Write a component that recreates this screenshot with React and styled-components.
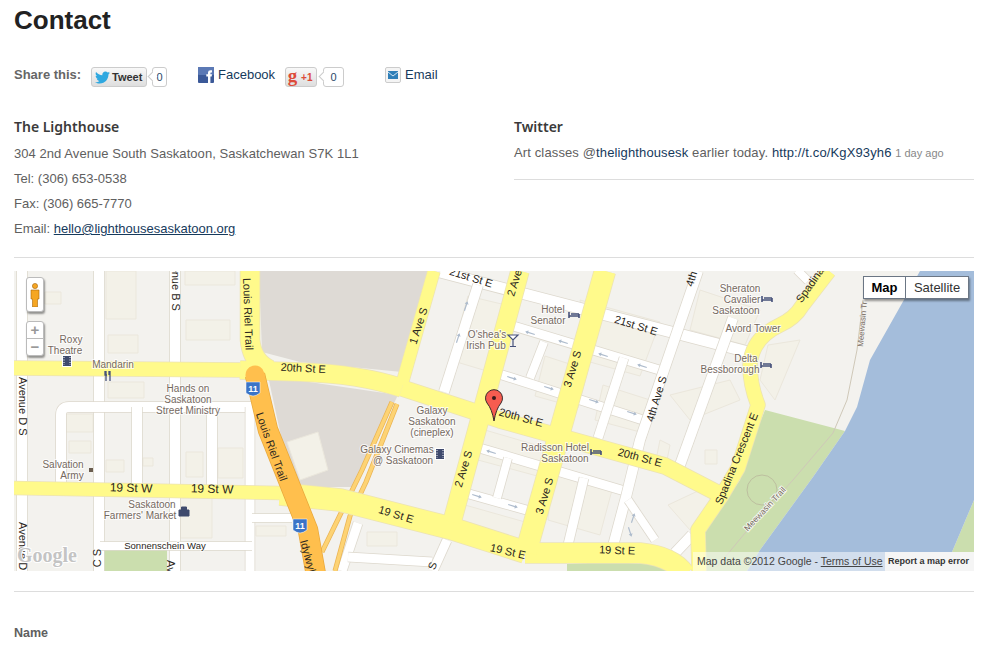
import React from "react";
import styled, { createGlobalStyle } from "styled-components";
import { FaTwitter } from "react-icons/fa";

const GlobalStyle = createGlobalStyle`
  html, body {
    margin: 0;
    padding: 0;
    background: #fff;
    overflow: hidden;
  }
  body {
    font-family: "Liberation Sans", Arial, sans-serif;
    font-size: 13px;
    color: #606060;
  }
`;

const Page = styled.div`
  width: 960px;
  height: 651px;
  padding: 0 23px 0 14px;
  overflow: hidden;
`;

const Title = styled.h1`
  margin: 0;
  padding-top: 5px;
  font-size: 26px;
  line-height: 30px;
  font-weight: 700;
  color: #222;
`;

const ShareRow = styled.div`
  display: flex;
  align-items: flex-start;
  margin-top: 32px;
  height: 20px;
`;

const ShareLabel = styled.strong`
  width: 77px;
  font-size: 13px;
  line-height: 16px;
  color: #666;
`;

const WidgetButton = styled.span`
  box-sizing: border-box;
  display: flex;
  align-items: center;
  width: ${(p) => p.$width}px;
  height: 20px;
  border: 1px solid #ccc;
  border-radius: 3px;
  background: linear-gradient(#f8f8f8, #dedede);
  font-size: 11px;
  font-weight: 700;
  color: ${(p) => p.$color};
`;

const Bubble = styled.span`
  position: relative;
  box-sizing: border-box;
  width: ${(p) => p.$width}px;
  height: 20px;
  margin-left: ${(p) => p.$gap}px;
  margin-right: ${(p) => p.$after}px;
  border: 1px solid #ccc;
  border-radius: 3px;
  font-size: 11px;
  line-height: 18px;
  text-align: center;
  color: #2b4a6b;

  &::before {
    content: "";
    position: absolute;
    left: -4px;
    top: 5px;
    width: 6px;
    height: 6px;
    background: #fff;
    border-left: 1px solid #ccc;
    border-bottom: 1px solid #ccc;
    transform: rotate(45deg);
  }
`;

const ShareLink = styled.a`
  display: flex;
  align-items: flex-start;
  gap: 4px;
  margin-right: ${(p) => p.$after}px;
  line-height: 16px;
  color: #163a5c;
`;

const GoogleG = styled.span`
  width: 13px;
  height: 18px;
  font-family: "Liberation Serif", serif;
  font-size: 19px;
  line-height: 15px;
  font-weight: 700;
  text-align: center;
  color: #dd4b39;
`;

const PlusOne = styled.span`
  margin-left: 2px;
  color: #dd4b39;
  font-size: 10px;
`;

const Columns = styled.div`
  display: grid;
  grid-template-columns: 460px 460px;
  column-gap: 40px;
  margin-top: 30px;
`;

const Heading = styled.h3`
  margin: 0 0 ${(p) => p.$below}px;
  font-family: "Noto Sans", sans-serif;
  font-size: 14px;
  line-height: 20px;
  font-weight: 600;
  color: #3a3a3a;
`;

const InfoLine = styled.p`
  margin: 0;
  line-height: 25px;
  letter-spacing: ${(p) => p.$spread || 0}px;
`;

const TweetLine = styled.p`
  margin: 0;
  padding: 3px 0 18px;
  border-bottom: 1px solid #ddd;
  line-height: 15px;
  letter-spacing: 0.13px;
`;

const BlueLink = styled.a`
  color: #163a5c;
`;

const MailLink = styled.a`
  color: #163a5c;
  text-decoration: underline;
`;

const TimeAgo = styled.small`
  font-size: 11px;
  letter-spacing: 0;
  color: #888;
`;

const Rule = styled.hr`
  margin: ${(p) => p.$top}px 0 ${(p) => p.$bottom}px;
  border: 0;
  border-top: 1px solid #ddd;
`;

const MapFrame = styled.div`
  position: relative;
  width: 960px;
  height: 300px;
  overflow: hidden;
  background: #f3f2ee;
`;

const MapCanvas = styled.svg`
  display: block;
  width: 960px;
  height: 300px;
`;

const MapLabel = styled.text`
  font-family: "Liberation Sans", Arial, sans-serif;
  font-size: ${(p) => p.$size || 11}px;
  fill: ${(p) => (p.$poi ? "#75695f" : "#2a2620")};
  stroke: ${(p) => (p.$halo ? "#fff" : "none")};
  stroke-width: 2px;
  stroke-opacity: 0.75;
  paint-order: stroke;
  text-anchor: ${(p) => p.$anchor || "middle"};
`;

const GoogleMark = styled.text`
  font-family: "Liberation Serif", serif;
  font-size: 20px;
  font-weight: 700;
  fill: #c4c4c4;
  stroke: #fff;
  stroke-width: 2px;
  paint-order: stroke;
`;

const ShieldNumber = styled.text`
  font-family: "Liberation Sans", Arial, sans-serif;
  font-size: 9px;
  font-weight: 700;
  fill: #fff;
  text-anchor: middle;
`;

const ControlCard = styled.div`
  position: absolute;
  left: 12px;
  top: ${(p) => p.$top}px;
  box-sizing: border-box;
  width: 18px;
  height: ${(p) => p.$height}px;
  background: #fff;
  border: 1px solid #bbb;
  border-radius: 3px;
  box-shadow: 1px 2px 2px rgba(0, 0, 0, 0.4);
  display: flex;
  flex-direction: column;
  align-items: center;
  justify-content: center;
`;

const ZoomKey = styled.span`
  flex: 1;
  width: 100%;
  text-align: center;
  font-size: 15px;
  line-height: 16px;
  font-weight: 700;
  color: #999;
  & + & {
    border-top: 1px solid #bbb;
  }
`;

const MapTypes = styled.div`
  position: absolute;
  right: 5px;
  top: 5px;
  display: flex;
  width: 106px;
  height: 23px;
  box-sizing: border-box;
  background: #fff;
  border: 1px solid #6b7684;
  box-shadow: 1px 2px 2px rgba(0, 0, 0, 0.4);
`;

const MapType = styled.span`
  flex: ${(p) => (p.$active ? "0 0 41px" : "1")};
  font-size: 13px;
  line-height: 21px;
  text-align: center;
  font-weight: ${(p) => (p.$active ? 700 : 400)};
  color: ${(p) => (p.$active ? "#000" : "#333")};
  & + & {
    border-left: 1px solid #6b7684;
  }
`;

const Attribution = styled.div`
  position: absolute;
  right: 0;
  bottom: 0;
  display: flex;
  height: 19px;
  line-height: 19px;
`;

const MapData = styled.span`
  width: 192px;
  padding-left: 4px;
  box-sizing: border-box;
  background: rgba(255, 255, 255, 0.5);
  font-size: 10.5px;
  color: #444;
  white-space: nowrap;
`;

const TermsLink = styled.a`
  text-decoration: underline;
  color: #444;
`;

const ReportError = styled.span`
  width: 89px;
  padding-left: 3px;
  box-sizing: border-box;
  background: #f5f5f5;
  font-weight: 700;
  font-size: 9px;
  color: #333;
  white-space: nowrap;
`;

const FieldLabel = styled.label`
  display: block;
  font-size: 12.5px;
  line-height: 16px;
  font-weight: 700;
  color: #606060;
`;

const MINOR = [
  ["M22 271V571", 10],
  ["M99 271V571", 10],
  ["M175 271V571", 10],
  ["M61 490V415Q61 407 69 407H255", 10],
  ["M137 407V490", 10],
  ["M212 407V490", 10],
  ["M250 407V571", 9],
  ["M252 518H292", 8],
  ["M100 546H252", 8],
  ["M440 272L752 353", 11],
  ["M500 322L666 372", 9],
  ["M496 373L646 421", 9],
  ["M476 447L628 492", 9],
  ["M462 492L530 511", 9],
  ["M698 271L640 440L626 497L613 546", 10],
  ["M624 358L598 438", 9],
  ["M584 478L568 545", 9],
  ["M733 318L680 465", 10],
  ["M478 285L444 392", 10],
  ["M544 342L530 378", 8],
  ["M508 458L497 498", 8],
  ["M358 523L342 571", 9],
  ["M348 557L432 562", 9],
  ["M447 540L433 571", 9],
  ["M797 270L808 281", 8],
  ["M675 553L692 535", 10],
  ["M628 500L655 540", 8],
];

const YELLOW = [
  ["M14 368L240 370", 14],
  ["M240 370L300 372Q360 374 402 388", 18],
  ["M402 388L500 420L665 466L727 498", 16],
  ["M14 488L280 493", 13],
  ["M280 494L340 500L450 528L525 552", 22],
  ["M525 553L640 553Q672 556 685 574", 20],
  ["M250 271V340Q252 362 270 370", 19],
  ["M434 271L402 384", 12],
  ["M520 271L452 522", 18],
  ["M605 271L526 552", 21],
  ["M829 271L802 306Q795 318 780 325Q752 338 750 365Q750 385 758 405L738 468L722 495L698 530L699 571", 14],
];

const BLOCKS = [
  "M45 292h16v12h-16z",
  "M106 271h30v48h-30z",
  "M108 335h30v18h-30z",
  "M185 271h50v14h-50z",
  "M186 320h44v20h-44z",
  "M108 382h36v16h-36z",
  "M66 414h27v18h-27z",
  "M69 441h22v12h-22z",
  "M106 460h18v12h-18z",
  "M143 458h10v8h-10z",
  "M186 452h17v25h-17z",
  "M218 448h25v30h-25z",
  "M180 498h32v40h-32z",
  "M256 526h30v10h-30z",
  "M287 442L318 432L328 470L300 480z",
  "M367 532h30v14h-30z",
  "M468 296L510 306L490 372L450 360z",
  "M580 300L660 322L640 376L590 362z",
  "M545 356L588 370L578 408L535 396z",
  "M603 385L650 400L640 432L595 420z",
  "M485 430L560 452L552 480L478 460z",
  "M465 505L525 522L518 545L458 528z",
  "M552 472L612 490L600 535L548 520z",
  "M700 290L760 310L745 345L690 330z",
  "M670 395L730 380L740 400L690 420z",
  "M660 440L670 445L665 470L655 465z",
  "M668 505L700 490L715 500L690 530z",
  "M705 450h12v14h-12z",
  "M768 345L800 340L775 400L760 380z",
];

const ARROWS = [
  [466, 306, -72],
  [458, 338, -72],
  [530, 333, 197],
  [563, 342, 197],
  [603, 355, 197],
  [642, 366, 197],
  [512, 378, 17],
  [549, 388, 17],
  [594, 401, 17],
  [632, 413, 17],
  [491, 452, 197],
  [477, 496, 17],
  [513, 506, 17],
  [633, 518, -72],
  [630, 532, 72],
];

const OneWay = ({ x, y, angle }) => (
  <path
    d="M-5 -0.6H2V-2L5 0L2 2V0.6H-5z"
    fill="#aebccd"
    transform={`translate(${x} ${y}) rotate(${angle})`}
  />
);

const Road = ({ d, width, fill, edge }) => (
  <>
    <path d={d} fill="none" stroke={edge} strokeWidth={width + 1.5} strokeLinejoin="round" />
    <path d={d} fill="none" stroke={fill} strokeWidth={width} strokeLinejoin="round" />
  </>
);

const Label = ({ x, y, angle, children, ...rest }) => (
  <MapLabel
    x={x}
    y={y}
    transform={angle ? `rotate(${angle} ${x} ${y})` : undefined}
    {...rest}
  >
    {children}
  </MapLabel>
);

const Poi = ({ x, y, children }) => (
  <Label x={x} y={y} $size={10} $poi $halo>
    {children}
  </Label>
);

const Film = ({ x, y }) => (
  <g transform={`translate(${x} ${y})`}>
    <rect x="-5" y="-6" width="10" height="12" fill="#fff" />
    <rect x="-4" y="-5" width="8" height="10" fill="#3f4a6d" />
    <path d="M-3 -4v8M3 -4v8" stroke="#fff" strokeDasharray="1 1.5" />
  </g>
);

const Bed = ({ x, y }) => (
  <path
    transform={`translate(${x} ${y})`}
    d="M-5 -3V3M5 -1V3M-5 1H5M-3 -1H5"
    fill="none"
    stroke="#46517a"
    strokeWidth="1.6"
  />
);

const Shield = ({ x, y }) => (
  <g transform={`translate(${x} ${y})`}>
    <path d="M-7 -7H7V4Q3 7 0 7Q-3 7 -7 4z" fill="#3b74c7" stroke="#fff" strokeWidth="0.5" />
    <ShieldNumber y="3">11</ShieldNumber>
  </g>
);

const StreetMap = () => (
  <MapCanvas viewBox="14 271 960 300">
    {/* land */}
    <path d="M259 271H430L402 372L300 362L262 352z" fill="#dedad5" />
    <path d="M268 376L398 395L353 487L292 487z" fill="#dedad5" />
    <path d="M765 410L845 431L813 477L760 550L747 571H700L705 530L740 480L753 440z" fill="#cbdeae" />
    <path d="M103 550H167V571H103z" fill="#cbdeae" />
    <path d="M567 564Q620 560 668 566V571H567z" fill="#cbdeae" />
    <path d="M974 500V571H947L952 552z" fill="#cbdeae" />
    <path d="M920 271H974V500L952 552L947 571H747L760 550L813 477L845 431L857 407L870 360L905 298z" fill="#a4bddb" />

    {BLOCKS.map((d) => (
      <path key={d} d={d} fill="#f3f1e8" stroke="#ebe7dc" />
    ))}

    <path d="M863 300L857 350L847 400L833 433L793 480L750 527L717 567" fill="none" stroke="#cfc8b8" />
    <circle cx="762" cy="490" r="15" fill="none" stroke="#bdbf9f" />

    {MINOR.map(([d, width]) => (
      <Road key={d} d={d} width={width} fill="#fff" edge="#ddd8cd" />
    ))}
    {ARROWS.map(([x, y, angle]) => (
      <OneWay key={`${x}-${y}`} x={x} y={y} angle={angle} />
    ))}

    {/* ramps next to the highway */}
    <Road d="M392 402L362 470L322 552" width={3.5} fill="#fdd374" edge="#eab453" />
    <Road d="M397 404L366 482L350 516L335 571" width={3.5} fill="#fdd374" edge="#eab453" />

    {YELLOW.map(([d, width]) => (
      <path key={d} d={d} fill="none" stroke="#ece3b5" strokeWidth={width + 1.5} strokeLinejoin="round" />
    ))}
    {YELLOW.map(([d, width]) => (
      <path key={d} d={d} fill="none" stroke="#fffa8b" strokeWidth={width} strokeLinejoin="round" />
    ))}

    <Road d="M255 375L268 430L292 490L308 530L316 575" width={19} fill="#ffbf4d" edge="#e8a83c" />
    <path d="M255 375L255.5 377" stroke="#ffbf4d" strokeWidth="19" strokeLinecap="round" />
    <Shield x={253} y={389} />
    <Shield x={300} y={526} />

    {/* road names */}
    <Label x={470} y={281} angle={17}>21st St E</Label>
    <Label x={518} y={284} angle={-73}>2 Ave</Label>
    <Label x={635} y={329} angle={17}>21st St E</Label>
    <Label x={422} y={327} angle={-72}>1 Ave S</Label>
    <Label x={576} y={370} angle={-73}>3 Ave S</Label>
    <Label x={660} y={400} angle={-73}>4th Ave S</Label>
    <Label x={695} y={280} angle={-73}>4th</Label>
    <Label x={303} y={372} angle={3}>20th St E</Label>
    <Label x={520} y={421} angle={15}>20th St E</Label>
    <Label x={639} y={461} angle={15}>20th St E</Label>
    <Label x={172} y={253} angle={90} $anchor="start">Avenue B S</Label>
    <Label x={243} y={278} angle={88} $anchor="start">Louis Riel Trail</Label>
    <Label x={19} y={377} angle={90} $anchor="start">Avenue D S</Label>
    <Label x={19} y={522} angle={90} $anchor="start">Avenue D</Label>
    <Label x={268} y={448} angle={70}>Louis Riel Trail</Label>
    <Label x={300} y={541} angle={75} $anchor="start">Idylwyld</Label>
    <Label x={467} y={470} angle={-73}>2 Ave S</Label>
    <Label x={548} y={497} angle={-73}>3 Ave S</Label>
    <Label x={813} y={287} angle={-55}>Spadina</Label>
    <Label x={740} y={460} angle={-68}>Spadina Crescent E</Label>
    <Label x={131} y={492} angle={2} $size={12}>19 St W</Label>
    <Label x={212} y={493} angle={2} $size={12}>19 St W</Label>
    <Label x={395} y={518} angle={17}>19 St E</Label>
    <Label x={507} y={555} angle={13}>19 St E</Label>
    <Label x={617} y={554} angle={2}>19 St E</Label>
    <Label x={165} y={549} $size={9.5} $halo>Sonnenschein Way</Label>
    <Label x={101} y={549} angle={-90} $anchor="end">Avenue C S</Label>
    <Label x={167} y={560} angle={90} $anchor="start">Ave</Label>
    <Label x={436} y={567} angle={-70}>S</Label>

    {/* places */}
    <Poi x={71} y={343}>Roxy</Poi>
    <Poi x={65} y={354}>Theatre</Poi>
    <Film x={67} y={361} />
    <Poi x={113} y={368}>Mandarin</Poi>
    <path d="M106 371V381M110 371V381M105 371V375H107M109 371V375" fill="none" stroke="#46517a" strokeWidth="1.3" />
    <Poi x={188} y={392}>Hands on</Poi>
    <Poi x={188} y={403}>Saskatoon</Poi>
    <Poi x={188} y={414}>Street Ministry</Poi>
    <Poi x={63} y={468}>Salvation</Poi>
    <Poi x={72} y={479}>Army</Poi>
    <rect x="89" y="468" width="4" height="4" fill="#6b5e50" />
    <Poi x={152} y={508}>Saskatoon</Poi>
    <Poi x={140} y={519}>Farmers' Market</Poi>
    <path d="M179 510H189V516H179zM181.500 510V507H186.500V510" fill="#3f4a6d" stroke="#3f4a6d" />
    <Poi x={432} y={414}>Galaxy</Poi>
    <Poi x={432} y={425}>Saskatoon</Poi>
    <Poi x={432} y={436}>(cineplex)</Poi>
    <Poi x={397} y={453}>Galaxy Cinemas</Poi>
    <Poi x={403} y={464}>@ Saskatoon</Poi>
    <Film x={440} y={454} />
    <Poi x={553} y={313}>Hotel</Poi>
    <Poi x={548} y={324}>Senator</Poi>
    <Bed x={574} y={315} />
    <Poi x={487} y={338}>O'shea's</Poi>
    <Poi x={486} y={349}>Irish Pub</Poi>
    <path d="M508 335H518L513 340zM513 340V346M510 346.500H516" fill="#fff" stroke="#46517a" strokeWidth="1.2" />
    <Poi x={555} y={451}>Radisson Hotel</Poi>
    <Poi x={565} y={462}>Saskatoon</Poi>
    <Bed x={596} y={452} />
    <Poi x={740} y={292}>Sheraton</Poi>
    <Poi x={742} y={303}>Cavalier</Poi>
    <Poi x={736} y={314}>Saskatoon</Poi>
    <Bed x={767} y={299} />
    <Poi x={753} y={332}>Avord Tower</Poi>
    <Poi x={746} y={362}>Delta</Poi>
    <Poi x={730} y={373}>Bessborough</Poi>
    <Bed x={766} y={365} />
    <Label x={863} y={347} angle={-85} $size={8} $anchor="start" $poi>Meewasin Tr</Label>
    <Label x={767} y={511} angle={-47} $size={8.5} $poi $halo>Meewasin Trail</Label>

    <GoogleMark x={17} y={562}>Google</GoogleMark>

    {/* marker */}
    <path
      d="M494 421Q492 409 487 403A8.500 8.500 0 1 1 501 403Q496 409 494 421z"
      fill="#f75c50"
      stroke="#3a2a2a"
    />
    <circle cx="494" cy="398" r="2" fill="#3a1a1a" />
  </MapCanvas>
);

const Pegman = () => (
  <svg width="10" height="24" viewBox="0 0 10 24">
    <circle cx="5" cy="3" r="2.6" fill="#f5a623" stroke="#a8660c" strokeWidth="0.6" />
    <path d="M1 7H9V16H7.500V24H2.500V16H1z" fill="#f5a623" stroke="#a8660c" strokeWidth="0.6" />
  </svg>
);

const MailIcon = () => (
  <svg width="16" height="16" viewBox="0 0 16 16">
    <rect x="0.500" y="0.500" width="15" height="15" rx="1.500" fill="#f4f4f4" stroke="#ccc" />
    <rect x="3" y="4" width="10" height="8" fill="#2f7fb8" />
    <path d="M3 5L8 9L13 5" fill="none" stroke="#cfe4f3" />
  </svg>
);

const FacebookIcon = () => (
  <svg width="16" height="16" viewBox="0 0 16 16">
    <rect width="16" height="16" rx="1" fill="#3b5998" />
    <rect width="16" height="8" rx="1" fill="#5b79b5" />
    <path d="M10 16V9.500H8.300V7.200H10V5.600Q10 3.200 12.500 3.200H14V5.400H13Q12.400 5.400 12.400 6.100V7.200H14L13.700 9.500H12.400V16z" fill="#fff" />
  </svg>
);

export default function App() {
  return (
    <Page>
      <GlobalStyle />
      <Title>Contact</Title>
      <ShareRow>
        <ShareLabel>Share this:</ShareLabel>
        <WidgetButton $width={56} $color="#333">
          <FaTwitter size={15} color="#2fa8e0" style={{ margin: "0 2px 0 3px" }} />
          Tweet
        </WidgetButton>
        <Bubble $width={15} $gap={5} $after={31}>0</Bubble>
        <ShareLink $after={10}>
          <FacebookIcon />
          Facebook
        </ShareLink>
        <WidgetButton $width={32} $color="#dd4b39">
          <GoogleG>g</GoogleG>
          <PlusOne>+1</PlusOne>
        </WidgetButton>
        <Bubble $width={21} $gap={6} $after={41}>0</Bubble>
        <ShareLink>
          <MailIcon />
          Email
        </ShareLink>
      </ShareRow>
      <Columns>
        <div>
          <Heading $below={4}>The Lighthouse</Heading>
          <InfoLine $spread={0.06}>304 2nd Avenue South Saskatoon, Saskatchewan S7K 1L1</InfoLine>
          <InfoLine>Tel: (306) 653-0538</InfoLine>
          <InfoLine>Fax: (306) 665-7770</InfoLine>
          <InfoLine>
            Email: <MailLink>hello@lighthousesaskatoon.org</MailLink>
          </InfoLine>
        </div>
        <div>
          <Heading $below={5}>Twitter</Heading>
          <TweetLine>
            Art classes @<BlueLink>thelighthousesk</BlueLink> earlier today.{" "}
            <BlueLink>http://t.co/KgX93yh6</BlueLink> <TimeAgo>1 day ago</TimeAgo>
          </TweetLine>
        </div>
      </Columns>
      <Rule $top={16} $bottom={13} />
      <MapFrame>
        <StreetMap />
        <ControlCard $top={6} $height={35}>
          <Pegman />
        </ControlCard>
        <ControlCard $top={50} $height={35}>
          <ZoomKey>+</ZoomKey>
          <ZoomKey>−</ZoomKey>
        </ControlCard>
        <MapTypes>
          <MapType $active>Map</MapType>
          <MapType>Satellite</MapType>
        </MapTypes>
        <Attribution>
          <MapData>
            Map data ©2012 Google - <TermsLink>Terms of Use</TermsLink>
          </MapData>
          <ReportError>Report a map error</ReportError>
        </Attribution>
      </MapFrame>
      <Rule $top={20} $bottom={33} />
      <FieldLabel>Name</FieldLabel>
    </Page>
  );
}
